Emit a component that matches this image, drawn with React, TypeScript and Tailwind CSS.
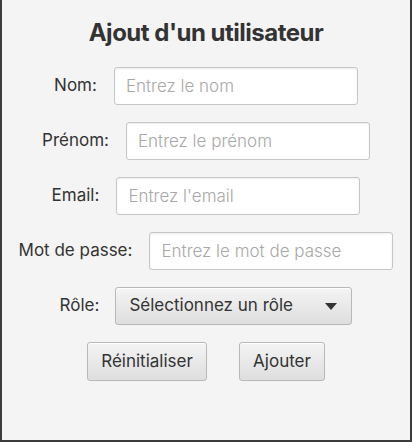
import { useState } from 'react'

const fields = [
  { label: 'Nom:', placeholder: 'Entrez le nom' },
  { label: 'Prénom:', placeholder: 'Entrez le prénom' },
  { label: 'Email:', placeholder: "Entrez l'email" },
  { label: 'Mot de passe:', placeholder: 'Entrez le mot de passe' },
]

const buttonClass =
  'h-[39px] rounded-[3px] border border-[#b8b8b8] bg-gradient-to-b from-[#f4f4f4] to-[#dedede] text-[17px] text-[#333] shadow-[inset_0_1px_0_#fff]'

export default function App() {
  const [values, setValues] = useState<Record<string, string>>({})

  return (
    <div
      className="w-[412px] h-[442px] bg-[#f4f4f4] border-x-2 border-b-2 border-[#3c3c3c] flex flex-col items-center"
      style={{ fontFamily: 'Inter, "Noto Sans", sans-serif' }}
    >
      <h1 className="mt-[17px] text-[24px] leading-[32px] font-bold text-[#333] tracking-[-0.5px]">
        Ajout d'un utilisateur
      </h1>

      <div className="mt-[18px] flex flex-col items-center gap-[17px]">
        {fields.map(({ label, placeholder }) => (
          <div key={label} className="flex items-center gap-[17px]">
            <span className="text-[17px] text-[#333]">{label}</span>
            <input
              type={label === 'Mot de passe:' ? 'password' : 'text'}
              placeholder={placeholder}
              value={values[label] ?? ''}
              onChange={(e) => setValues({ ...values, [label]: e.target.value })}
              className="w-[244px] h-[38px] rounded-[3px] border border-[#c6c6c6] bg-white px-[11px] text-[17px] font-light text-[#333] placeholder:text-[#a8a8a8] shadow-[inset_0_1px_2px_rgba(0,0,0,0.08)] outline-none"
            />
          </div>
        ))}

        <div className="flex items-center gap-[16px]">
          <span className="text-[17px] text-[#333]">Rôle:</span>
          <button className="w-[237px] h-[38px] rounded-[3px] border border-[#b8b8b8] bg-gradient-to-b from-[#f4f4f4] to-[#dedede] shadow-[inset_0_1px_0_#fff] flex items-center justify-between pl-[13px] pr-[14px] text-[17px] text-[#333]">
            <span>Sélectionnez un rôle</span>
            <svg width="12" height="7" viewBox="0 0 12 7">
              <path d="M0 0 H12 L6 7 Z" fill="#333" />
            </svg>
          </button>
        </div>

        <div className="flex items-center gap-[32px]">
          <button className={`${buttonClass} w-[120px]`}>Réinitialiser</button>
          <button className={`${buttonClass} w-[86px]`}>Ajouter</button>
        </div>
      </div>
    </div>
  )
}
